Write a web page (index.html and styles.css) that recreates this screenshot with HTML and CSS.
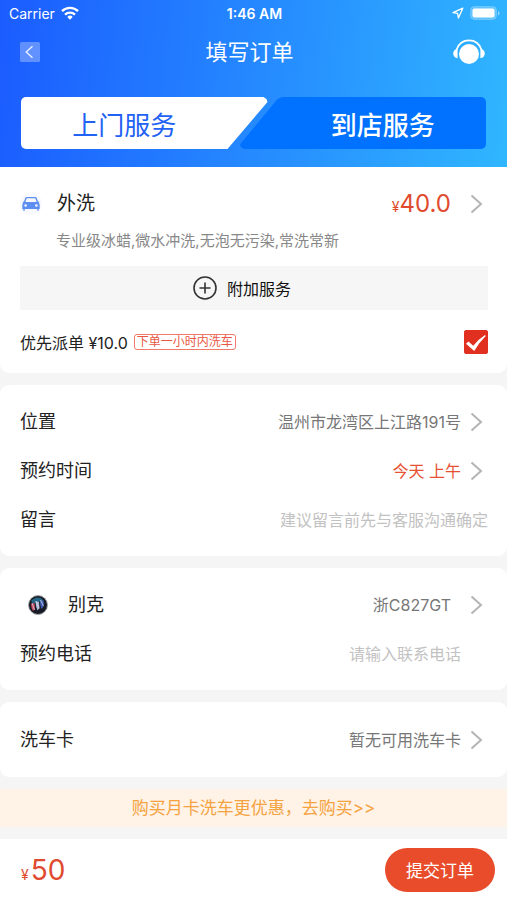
FILE: index.html
```html
<!DOCTYPE html>
<html lang="zh-CN">
<head>
<meta charset="utf-8">
<meta name="viewport" content="width=device-width, initial-scale=1">
<title>填写订单</title>
<link rel="stylesheet" href="styles.css">
</head>
<body>
<svg class="defs" aria-hidden="true">
  <symbol id="chevron" viewBox="0 0 18 20"><path d="M1.5 1.500 11 10l-9.500 8.500" fill="none" stroke="#b4b4b4" stroke-width="2"/></symbol>
</svg>

<header class="header">
  <div class="status">
    <div class="status-left">
      <span>Carrier</span>
      <svg class="wifi" viewBox="0 0 18 14" aria-hidden="true">
        <g fill="none" stroke="#fff" stroke-width="2.300"><path d="M1 5.200a11.500 11.500 0 0 1 16 0"/><path d="M4 8.600a7.200 7.200 0 0 1 10 0"/></g>
        <path d="M6.300 10.900a3.900 3.900 0 0 1 5.400 0L9 13.800z" fill="#fff"/>
      </svg>
    </div>
    <time class="status-time">1:46 AM</time>
    <div class="status-right">
      <svg class="location" viewBox="0 0 12 12" aria-hidden="true"><path d="M10.800 1.200 1 5.600l4.600.8.800 4.600z" fill="none" stroke="#fff" stroke-width="1.300" stroke-linejoin="round"/></svg>
      <svg class="battery" viewBox="0 0 30 14" aria-hidden="true"><rect x=".5" y=".5" width="26" height="13" rx="4" fill="#fff" fill-opacity=".25" stroke="#fff" stroke-opacity=".2"/><rect x="2.500" y="2.500" width="22" height="9" rx="2" fill="#fff"/><path d="M28 5v4.500q1.500-.8 1.500-2.200T28 5z" fill="#fff" fill-opacity=".5"/></svg>
    </div>
  </div>
  <div class="nav">
    <button class="icon-button icon-button-start" type="button" aria-label="返回">
      <svg class="back" viewBox="0 0 20 20" aria-hidden="true"><rect width="20" height="20" rx="1.500" fill="#fff" fill-opacity=".3"/><path d="M12.500 4.200 6.200 10l6.300 5.800" fill="none" stroke="#fff" stroke-opacity=".85" stroke-width="1.400"/></svg>
    </button>
    <h1 class="nav-title">填写订单</h1>
    <button class="icon-button" type="button" aria-label="客服">
      <svg class="support" viewBox="0 0 32 26" aria-hidden="true"><circle cx="16" cy="15" r="10" fill="#fff"/><path d="M3.600 10.500C5.500 5 10 1.300 16 1.300S26.500 5 28.400 10.500" fill="none" stroke="#fff" stroke-width="1.700"/><path d="M4.600 9.500v9.800C2 18.800.2 16.800.2 14.400s1.800-4.400 4.400-4.900zM27.400 9.500v9.800c2.600-.5 4.400-2.500 4.400-4.900s-1.800-4.400-4.400-4.900z" fill="#fff"/></svg>
    </button>
  </div>
  <div class="tabs">
    <button class="tab tab-home" type="button">上门服务</button>
    <button class="tab tab-shop" type="button">到店服务</button>
  </div>
</header>

<main class="content">
  <section class="card card-service">
    <div class="row service-row">
      <svg class="car" viewBox="0 0 22 22" aria-hidden="true"><circle cx="11" cy="11" r="11" fill="#f7f9fd"/><path fill="#5d8ff2" fill-rule="evenodd" d="M7 4h8q1.400 0 1.900 1.400L18 8.600l1.500.5-.8 1q1 .7 1 2V16h-1v1.800h-1.400V16H4.700v1.800H3.300V16h-1v-3.900q0-1.300 1-2l-.8-1L4 8.600l1.100-3.200Q5.600 4 7 4zm.2 1.300q-.6 0-.8.700L5.400 9h11.200l-1-3q-.2-.7-.8-.7zM5.600 11.200a1.300 1.300 0 1 0 0 2.600 1.300 1.300 0 0 0 0-2.600zm10.800 0a1.300 1.300 0 1 0 0 2.600 1.300 1.300 0 0 0 0-2.600z"/></svg>
      <h2 class="label service-name">外洗</h2>
      <span class="price"><span class="yen">¥</span>40.0</span>
      <svg class="chevron"><use href="#chevron"/></svg>
    </div>
    <p class="service-note">专业级冰蜡,微水冲洗,无泡无污染,常洗常新</p>
    <button class="extra" type="button">
      <svg class="plus" viewBox="0 0 24 24" aria-hidden="true"><g fill="none" stroke="#333" stroke-width="1.600"><circle cx="12" cy="12" r="11"/><path d="M12 6.500v11M6.500 12h11"/></g></svg>
      附加服务
    </button>
    <div class="priority">
      <label class="priority-label" for="priority">优先派单 ¥10.0</label>
      <span class="tag">下单一小时内洗车</span>
      <span class="check">
        <input class="check-input" type="checkbox" id="priority" checked>
        <svg class="check-mark" viewBox="0 0 24 24" aria-hidden="true"><path d="M2 13.800 4.400 11.600 9.300 15.800Q14 9.500 21 5L21.800 6Q15 12.500 10.200 21z" fill="#fff"/></svg>
      </span>
    </div>
  </section>

  <section class="card">
    <div class="row">
      <span class="label">位置</span>
      <span class="value">温州市龙湾区上江路191号</span>
      <svg class="chevron"><use href="#chevron"/></svg>
    </div>
    <div class="row">
      <span class="label">预约时间</span>
      <span class="value value-accent">今天 上午</span>
      <svg class="chevron"><use href="#chevron"/></svg>
    </div>
    <div class="row">
      <label class="label" for="message">留言</label>
      <input class="field" id="message" type="text" placeholder="建议留言前先与客服沟通确定">
    </div>
  </section>

  <section class="card">
    <div class="row">
      <svg class="brand" viewBox="0 0 20 20" aria-hidden="true"><circle cx="10" cy="10" r="9.500" fill="#171a24" stroke="#a4a6aa"/><path d="M3 6q4-5 10-3l3 3-6 1-5 2z" fill="#246684"/><path d="m3 9 3.500-1 .5 6-2 2q-2-3-2-7z" fill="#c9475e"/><path d="m7.500 6 3.500 1 .5 6-2 2.500q-2-3.500-2-9.500z" fill="#aebadb"/><path d="m12 5 4 1.500-.5 5-2 2.500Q12 11 12 5z" fill="#3d5bb5"/><path d="m4 8 2.500 7M8 6.500l3 7M12.500 5l3 6" stroke="#d5d9e4" stroke-width=".8"/></svg>
      <span class="label brand-name">别克</span>
      <span class="value value-wide">浙C827GT</span>
      <svg class="chevron"><use href="#chevron"/></svg>
    </div>
    <div class="row">
      <label class="label" for="phone">预约电话</label>
      <input class="field field-inset" id="phone" type="tel" placeholder="请输入联系电话">
    </div>
  </section>

  <section class="card card-single">
    <div class="row">
      <span class="label">洗车卡</span>
      <span class="value">暂无可用洗车卡</span>
      <svg class="chevron"><use href="#chevron"/></svg>
    </div>
  </section>

  <a class="promo" href="#">购买月卡洗车更优惠，去购买&gt;&gt;</a>
</main>

<footer class="footer">
  <span class="total"><span class="yen">¥</span>50</span>
  <button class="submit" type="button">提交订单</button>
</footer>
</body>
</html>
```
FILE: styles.css
```css
* {
  box-sizing: border-box;
}

body {
  display: flex;
  flex-direction: column;
  min-height: 100vh;
  margin: 0;
  background: #f5f5f5;
  color: #222;
  font-family: Inter, "Noto Sans CJK SC", sans-serif;
  font-size: 16px;
}

button,
input {
  margin: 0;
  padding: 0;
  border: 0;
  background: none;
  color: inherit;
  font: inherit;
}

button {
  cursor: pointer;
}

h1,
h2,
p {
  margin: 0;
  font-weight: 400;
}

svg {
  display: block;
  flex: none;
}

.defs {
  position: absolute;
  width: 0;
  height: 0;
}

.header {
  padding-bottom: 18px;
  background: linear-gradient(96deg, #1b5cff 0%, #2484ff 45%, #30b6ff 100%);
  color: #fff;
}

.status {
  display: grid;
  grid-template-columns: 1fr auto 1fr;
  align-items: center;
  height: 28px;
  padding: 0 7px 2px 9px;
  font-size: 14px;
}

.status-left,
.status-right {
  display: flex;
  align-items: center;
  gap: 6px;
}

.status-right {
  justify-content: flex-end;
}

.status-time {
  font-weight: 600;
}

.wifi {
  width: 18px;
  height: 14px;
}

.location {
  width: 12px;
  height: 12px;
}

.battery {
  width: 30px;
  height: 14px;
}

.nav {
  display: flex;
  justify-content: space-between;
  align-items: center;
  height: 48px;
  padding: 0 22px 0 20px;
}

.nav-title {
  font-size: 22px;
  line-height: 28px;
}

.icon-button-start {
  padding-right: 6px;
}

.back {
  width: 20px;
  height: 20px;
}

.support {
  width: 32px;
  height: 26px;
}

.tabs {
  display: flex;
  margin-top: 21px;
  padding: 0 21px;
}

.tab {
  flex: 1;
  height: 52px;
  border-radius: 5px;
  font-size: 26px;
  font-weight: 500;
}

.tab-home {
  padding-right: 40px;
  background: #fff;
  color: #2262f4;
  font-weight: 400;
  clip-path: polygon(0 0, calc(100% - 4px) 0, calc(100% - 1px) 2px, 100% 5px, calc(100% - 40px) 100%, 0 100%);
}

.tab-shop {
  margin-left: -28px;
  padding-left: 40px;
  background: #0072ff;
  clip-path: polygon(43px 0, 100% 0, 100% 100%, 2px 100%, 0 calc(100% - 4px), 38px 2px);
}

.content {
  display: flex;
  flex-direction: column;
  gap: 12px;
  margin-bottom: 12px;
}

.card {
  padding: 12px 19px 12px 20px;
  border-radius: 9px;
  background: #fff;
}

.card-service {
  padding-bottom: 11px;
  border-radius: 0 0 9px 9px;
}

.card-single {
  padding-top: 13px;
  padding-bottom: 13px;
}

.row {
  display: flex;
  align-items: center;
  height: 49px;
}

.label {
  font-size: 18px;
  line-height: 24px;
}

.service-name {
  margin-left: 15px;
  font-size: 19px;
}

.car {
  width: 22px;
  height: 22px;
}

.chevron {
  width: 18px;
  height: 20px;
  margin-left: 9px;
}

.value {
  margin-left: auto;
  color: #777;
  line-height: 20px;
}

.value-wide {
  margin-right: 10px;
}

.value-accent {
  color: #e85034;
}

.price,
.total {
  color: #e04b30;
}

.price {
  margin: 0 10px 0 auto;
  font-size: 24px;
}

.total {
  font-size: 28px;
}

.yen {
  font-size: 14px;
}

.total .yen {
  margin-right: 2px;
}

.service-note {
  margin-left: 36px;
  color: #888;
  font-size: 15px;
  line-height: 26px;
}

.extra {
  display: flex;
  justify-content: center;
  align-items: center;
  gap: 10px;
  width: 100%;
  height: 44px;
  margin-top: 12px;
  padding-right: 24px;
  background: #f6f6f6;
  color: #111;
}

.plus {
  width: 24px;
  height: 24px;
}

.priority {
  display: flex;
  align-items: center;
  height: 40px;
  margin-top: 12px;
}

.tag {
  margin-left: 6px;
  padding: 0 2px;
  border: 1px solid #f0796b;
  border-radius: 3px;
  color: #e95745;
  font-size: 12px;
  line-height: 14px;
}

.check {
  display: grid;
  margin-left: auto;
}

.check-input,
.check-mark {
  grid-area: 1 / 1;
  width: 24px;
  height: 24px;
}

.check-input {
  appearance: none;
  border: 1px solid #e12f20;
  border-radius: 2px;
}

.check-input:checked {
  background: #e12f20;
}

.check-mark {
  pointer-events: none;
}

.field {
  flex: 1;
  min-width: 0;
  height: 40px;
  outline: 0;
  text-align: right;
}

.field::placeholder {
  color: #c2c2c2;
  opacity: 1;
}

.field-inset {
  margin-right: 27px;
}

.brand {
  width: 20px;
  height: 20px;
  margin-left: 8px;
}

.brand-name {
  margin-left: 20px;
}

.promo {
  background: #fff2e6;
  color: #f5a341;
  font-size: 17px;
  line-height: 38px;
  text-align: center;
  text-decoration: none;
}

.footer {
  display: flex;
  flex: 1;
  justify-content: space-between;
  align-items: center;
  min-height: 60px;
  padding: 0 12px 0 21px;
  background: #fff;
}

.submit {
  width: 110px;
  height: 44px;
  border-radius: 22px;
  background: #e84c2b;
  color: #fff;
  font-size: 17px;
}
```
